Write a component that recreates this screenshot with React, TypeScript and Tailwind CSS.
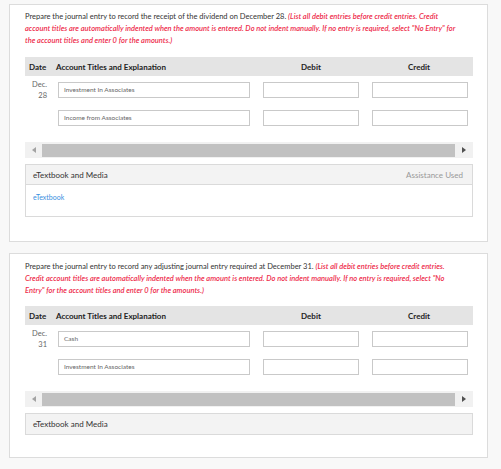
import React from 'react';

type Row = { account: string };

const Entry = ({ month, day, rows }: { month: string; day: string; rows: Row[] }) => (
  <div>
    <div className="grid grid-cols-[28px_204px_108px_108px] h-[19px] items-center bg-[#e4e4e4] text-[8px] font-bold text-[#222]">
      <div className="pl-[4px]">Date</div>
      <div className="pl-[3px]">Account Titles and Explanation</div>
      <div className="text-center">Debit</div>
      <div className="text-center">Credit</div>
    </div>
    {rows.map((r, i) => (
      <div key={i} className="grid grid-cols-[28px_204px_108px_108px] h-[28px] items-center">
        <div className="pr-[6px] text-right text-[7.5px] leading-[11px] text-[#666]">
          {i === 0 && (
            <>
              <div>{month}</div>
              <div>{day}</div>
            </>
          )}
        </div>
        <div className="pl-[5px]">
          <div className="w-[192px] h-[16px] border border-[#c9c9c9] bg-white pl-[5px] flex items-center text-[6.5px] text-[#666]">
            {r.account}
          </div>
        </div>
        <div className="pl-[6px]">
          <div className="w-[96px] h-[16px] border border-[#c9c9c9] bg-white" />
        </div>
        <div className="pl-[7px]">
          <div className="w-[96px] h-[16px] border border-[#c9c9c9] bg-white" />
        </div>
      </div>
    ))}
  </div>
);

const Scrollbar = () => (
  <div className="flex h-[16px] items-center bg-[#f1f1f1]">
    <div className="w-[17px] flex justify-center">
      <div className="w-0 h-0 border-y-[3px] border-y-transparent border-r-[4px] border-r-[#a3a3a3]" />
    </div>
    <div className="flex-1 h-[13px] bg-[#c1c1c1]" />
    <div className="w-[18px] flex justify-center">
      <div className="w-0 h-0 border-y-[3px] border-y-transparent border-l-[4px] border-l-[#505050]" />
    </div>
  </div>
);

const Media = ({ showBody }: { showBody: boolean }) => (
  <div className="border border-[#dadada] mt-[6px]">
    <div className={`flex justify-between items-center h-[20px] px-[7px] bg-[#f3f3f3] text-[8px] ${showBody ? 'border-b border-[#dadada]' : ''}`}>
      <span className="text-[#333]">eTextbook and Media</span>
      {showBody && <span className="text-[#999] pr-[2px]">Assistance Used</span>}
    </div>
    {showBody && (
      <div className="h-[31px] px-[7px] pt-[7px] text-[7px] text-[#3b8fe0]">eTextbook</div>
    )}
  </div>
);

export default function App() {
  return (
    <div className="min-h-[469px] bg-[#f8f8f8] pt-[4px] pl-[9px] pr-[13px]" style={{ fontFamily: 'Lato, "Open Sans", sans-serif' }}>
      <div className="bg-white border border-[#dcdcdc] pt-[6px] pb-[24px] pl-[15px] pr-[14px]">
        <p className="text-[7.5px] leading-[12px] text-[#333] whitespace-nowrap">
          Prepare the journal entry to record the receipt of the dividend on December 28.{' '}
          <em className="text-[#ee2b4b] font-semibold text-[7.5px]">
            (List all debit entries before credit entries. Credit
            <br />
            account titles are automatically indented when the amount is entered. Do not indent manually. If no entry is required, select "No Entry" for
            <br />
            the account titles and enter 0 for the amounts.)
          </em>
        </p>
        <div className="mt-[10px]">
          <Entry month="Dec." day="28" rows={[{ account: 'Investment In Associates' }, { account: 'Income from Associates' }]} />
        </div>
        <div className="mt-[10px]">
          <Scrollbar />
        </div>
        <Media showBody />
      </div>

      <div className="mt-[11px] bg-white border border-[#dcdcdc] pt-[7px] pb-[22px] pl-[15px] pr-[14px]">
        <p className="text-[7.5px] leading-[12px] text-[#333] whitespace-nowrap">
          Prepare the journal entry to record any adjusting journal entry required at December 31.{' '}
          <em className="text-[#ee2b4b] font-semibold text-[7.5px]">
            (List all debit entries before credit entries.
            <br />
            Credit account titles are automatically indented when the amount is entered. Do not indent manually. If no entry is required, select "No
            <br />
            Entry" for the account titles and enter 0 for the amounts.)
          </em>
        </p>
        <div className="mt-[9px]">
          <Entry month="Dec." day="31" rows={[{ account: 'Cash' }, { account: 'Investment In Associates' }]} />
        </div>
        <div className="mt-[10px]">
          <Scrollbar />
        </div>
        <Media showBody={false} />
      </div>
    </div>
  );
}
